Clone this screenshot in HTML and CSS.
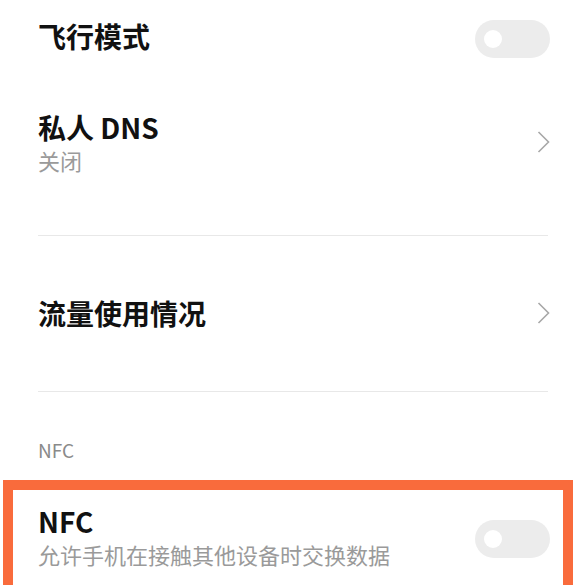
FILE: index.html
```html
<!DOCTYPE html>
<html lang="zh-CN">
<head>
    <meta charset="UTF-8">
    <meta name="viewport" content="width=device-width, initial-scale=1.0">
    <title>连接与共享</title>
    <link rel="stylesheet" href="styles.css">
</head>
<body>

    <!-- 飞行模式 -->
    <div class="item item-air">
        <div class="item-text">
            <div class="item-title">飞行模式</div>
        </div>
        <div class="switch"><span class="knob"></span></div>
    </div>

    <!-- 私人 DNS -->
    <div class="item item-dns">
        <div class="item-text">
            <div class="item-title">私人 DNS</div>
            <div class="item-desc">关闭</div>
        </div>
        <svg class="arrow" width="14" height="22" viewBox="0 0 14 22">
            <path d="M2.5 1 L12.5 11 L2.5 21" fill="none" stroke="#a8a8a8" stroke-width="1.6"/>
        </svg>
    </div>

    <div class="divider"></div>

    <!-- 流量使用情况 -->
    <div class="item item-data">
        <div class="item-text">
            <div class="item-title">流量使用情况</div>
        </div>
        <svg class="arrow" width="14" height="22" viewBox="0 0 14 22">
            <path d="M2.5 1 L12.5 11 L2.5 21" fill="none" stroke="#a8a8a8" stroke-width="1.6"/>
        </svg>
    </div>

    <div class="divider"></div>

    <div class="section-title">NFC</div>

    <!-- NFC (highlighted) -->
    <div class="highlight">
        <div class="item item-nfc">
            <div class="item-text">
                <div class="item-title">NFC</div>
                <div class="item-desc">允许手机在接触其他设备时交换数据</div>
            </div>
            <div class="switch"><span class="knob"></span></div>
        </div>
    </div>

</body>
</html>
```

FILE: styles.css
```css
* {
    box-sizing: border-box;
    margin: 0;
    padding: 0;
    font-family: "Noto Sans CJK SC", "Noto Sans", sans-serif;
}

body {
    background: #fff;
    width: 579px;
    height: 585px;
    overflow: hidden;
}

.item {
    display: flex;
    align-items: center;
    justify-content: space-between;
    padding: 0 29px 0 38px;
}

.item-title {
    font-size: 28px;
    line-height: 36px;
    font-weight: 600;
    color: #111;
}

.item-desc {
    font-size: 22px;
    line-height: 30px;
    color: #9a9a9a;
}

/* Rows */
.item-air {
    padding-top: 20px;
}

.item-air .item-title {
    margin-top: -6px;
}

.item-dns {
    margin-top: 51px;
}

.item-data {
    padding-top: 59px;
    padding-bottom: 60px;
}

.divider {
    height: 1px;
    background: #e8e8e8;
    margin: 0 31px 0 38px;
}

.item-dns + .divider {
    margin-top: 60px;
}

.section-title {
    margin-top: 46px;
    padding-left: 38px;
    font-size: 19px;
    line-height: 24px;
    color: #8a8a8a;
}

/* Switch */
.switch {
    width: 75px;
    height: 38px;
    border-radius: 19px;
    background: #ececec;
    display: flex;
    align-items: center;
    padding-left: 9px;
}

.knob {
    width: 18px;
    height: 18px;
    border-radius: 50%;
    background: #fff;
}

.arrow {
    display: block;
}

/* Highlight box, cut off by the bottom of the screen */
.highlight {
    margin: 18px 0 0 3px;
    width: 570px;
    height: 105px;
    border: 10px solid #f96b3c;
    border-bottom: none;
}

.highlight .item {
    padding: 13px 13px 0 25px;
}

.highlight .switch {
    margin-top: 6px;
}
```
